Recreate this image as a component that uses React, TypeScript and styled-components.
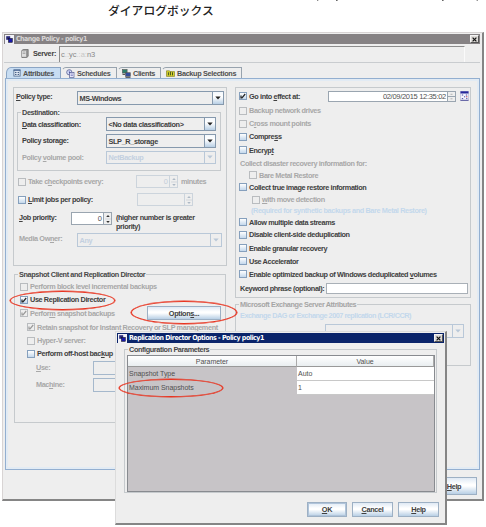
import React from "react";
import styled, { createGlobalStyle, css } from "styled-components";

const Global = createGlobalStyle`
  * { box-sizing: border-box; }
  body { margin: 0; background: #fff; overflow: hidden; }
`;

const Page = styled.div`
  position: relative;
  width: 486px;
  height: 527px;
  overflow: hidden;
  font: bold 7.3px/9px "Liberation Sans", Arial, sans-serif;
  letter-spacing: -0.39px;
  color: #444;
`;

const CaptionBlock = styled.div`
  height: 32px;
`;
const CaptionTail = styled.svg`
  display: block;
  width: 486px;
  height: 2px;
`;
const Caption = styled.div`
  padding-left: 108px;
  font: 500 11.8px/15px "Noto Sans CJK JP", sans-serif;
  letter-spacing: 0;
  color: #222;
`;

const Window = styled.section`
  width: 482px;
  height: 469px;
  margin-left: 2px;
  padding: 1px 2px 0 1px;
  background: #eeeeee;
  border: 1px solid #d8d4d4;
  border-right: 2px solid #858585;
  border-bottom: 2px solid #858585;
`;

const TitleBar = styled.header<{ $active?: boolean }>`
  display: flex;
  align-items: center;
  height: 10px;
  padding: 0 1px 0 1px;
  gap: 2px;
  font: bold 7px/10px "DejaVu Sans Condensed", "DejaVu Sans", sans-serif;
  letter-spacing: ${(p) => (p.$active ? "-0.48px" : "-0.5px")};
  color: ${(p) => (p.$active ? "#fff" : "#d8d5d5")};
  background: ${(p) => (p.$active ? "#0a246a" : "#868284")};
`;
const Spacer = styled.div`
  flex: 1;
`;
const CloseBox = styled.button`
  display: flex;
  align-items: center;
  justify-content: center;
  width: 9px;
  height: 8px;
  padding: 0;
  background: #dcd9d6;
  border: 1px solid #f4f4f4;
  border-right-color: #555;
  border-bottom-color: #555;
`;

const ServerRow = styled.div`
  display: flex;
  align-items: center;
  height: 19px;
  padding-left: 17px;
  gap: 4px;
  border-bottom: 1px solid #c9cccf;
`;
const ServerField = styled.div`
  width: 406px;
  height: 16px;
  margin-top: 2px;
  margin-left: -1px;
  padding: 2px 1px;
  font: 7.5px/11px "Liberation Sans", sans-serif;
  letter-spacing: 0;
  color: #888;
  border-top: 1px solid #8c8c8c;
  border-left: 1px solid #8c8c8c;
  border-right: 1px solid #fafafa;
`;
const Faint = styled.span`
  color: #c6c6c6;
`;

const Tabs = styled.nav`
  display: flex;
  height: 15px;
  padding: 4px 0 0 2px;
`;
const Tab = styled.div<{ $w: number; $on?: boolean }>`
  display: flex;
  align-items: center;
  gap: 2px;
  width: ${(p) => p.$w}px;
  height: 11px;
  padding-left: ${(p) => (p.$on ? 6 : 4)}px;
  white-space: nowrap;
  letter-spacing: -0.34px;
  color: #505050;
  background: ${(p) => (p.$on ? "#c8ddf2" : "#eeeeee")};
  border: 1px solid ${(p) => (p.$on ? "#8ba5c4" : "#98a3ae")};
  border-bottom: 0;
  border-left-color: ${(p) => (p.$on ? "#8ba5c4" : "#eeeeee")};
  border-top-left-radius: 5px 6px;
`;

const TabPanel = styled.main`
  display: flex;
  gap: 8px;
  width: 475px;
  height: 392px;
  margin-left: 1px;
  padding: 8px 0 0 7px;
  border: 1px solid #93afd0;
  box-shadow: inset 0 0 0 2px #e2ebf4;
`;
const Column = styled.div<{ $w: number }>`
  width: ${(p) => p.$w}px;
`;
const Group = styled.fieldset<{ $h: number; $w?: number; $mt?: number; $ml?: number }>`
  display: block;
  width: ${(p) => (p.$w ? p.$w + "px" : "100%")};
  min-width: 0;
  height: ${(p) => p.$h}px;
  margin: ${(p) => p.$mt ?? 0}px 0 0 ${(p) => p.$ml ?? 0}px;
  padding: 0;
  border: 1px solid #c6cacd;
`;
const GroupTitle = styled.legend<{ $off?: boolean }>`
  height: 9px;
  margin-left: 3px;
  padding: 0 1px;
  color: ${(p) => (p.$off ? "#a5a5a5" : "#484848")};
`;

const Row = styled.div<{ $h: number; $pl?: number; $mt?: number }>`
  display: flex;
  align-items: center;
  height: ${(p) => p.$h}px;
  margin-top: ${(p) => p.$mt ?? 0}px;
  padding-left: ${(p) => p.$pl ?? 0}px;
  white-space: nowrap;
`;
const Text = styled.span<{ $off?: boolean; $w?: number; $hint?: boolean; $up?: number; $ml?: number; $ls?: number }>`
  flex: none;
  width: ${(p) => (p.$w ? p.$w + "px" : "auto")};
  margin-left: ${(p) => p.$ml ?? 0}px;
  padding-bottom: ${(p) => p.$up ?? 0}px;
  color: ${(p) => (p.$hint ? "#c3d8ec" : p.$off ? "#a8a8a8" : "#404040")};
  ${(p) => p.$ls !== undefined && css`letter-spacing: ${p.$ls}px;`}
  u {
    text-decoration-thickness: 1px;
    text-underline-offset: 0.5px;
  }
`;
const Priority = styled(Text)`
  padding-top: 7px;
  line-height: 9px;
`;
const Labelled = styled.span<{ $w: number }>`
  display: flex;
  flex: none;
  align-items: center;
  width: ${(p) => p.$w}px;
`;

const Box = styled.span<{ $off?: boolean }>`
  display: flex;
  flex: none;
  width: 8px;
  height: 8px;
  margin-right: 2px;
  background: ${(p) => (p.$off ? "#eeeeee" : "linear-gradient(#fff, #c4d8ec)")};
  border: 1px solid ${(p) => (p.$off ? "#b9bcbf" : "#86a0bd")};
`;

const fieldTone = (off?: boolean) => css`
  color: ${off ? "#c3d0e0" : "#404040"};
  border: 1px solid ${off ? "#b9c8d8" : "#8699ad"};
`;
const ComboFrame = styled.div<{ $w: number; $h: number; $off?: boolean }>`
  display: flex;
  flex: none;
  width: ${(p) => p.$w}px;
  height: ${(p) => p.$h}px;
  line-height: ${(p) => p.$h - 1}px;
  ${(p) => fieldTone(p.$off)}
`;
const ComboValue = styled.div`
  flex: 1;
  padding-left: 1.5px;
  letter-spacing: -0.35px;
`;
const ComboArrow = styled.div<{ $off?: boolean }>`
  display: flex;
  align-items: center;
  justify-content: center;
  width: 11px;
  border-left: 1px solid ${(p) => (p.$off ? "#b9c8d8" : "#8699ad")};
  background: ${(p) => (p.$off ? "#eeeeee" : "linear-gradient(#f4f8fc, #fff 40%, #b8cfe5)")};
`;
const SpinFrame = styled.div<{ $w: number; $h: number; $off?: boolean }>`
  display: flex;
  flex: none;
  width: ${(p) => p.$w}px;
  height: ${(p) => p.$h}px;
  font: 7.5px/${(p) => p.$h - 1}px "Liberation Sans", sans-serif;
  letter-spacing: 0;
  background: ${(p) => (p.$off ? "#eeeeee" : "#fff")};
  color: ${(p) => (p.$off ? "#c3cdd8" : "#505050")};
  border: 1px solid ${(p) => (p.$off ? "#ccd4dc" : "#9aa5b0")};
`;
const SpinValue = styled.div<{ $ls?: number }>`
  flex: 1;
  padding-right: 1px;
  text-align: right;
  white-space: nowrap;
  letter-spacing: ${(p) => p.$ls ?? 0}px;
`;
const SpinButtons = styled.div<{ $off?: boolean }>`
  display: flex;
  align-items: center;
  justify-content: center;
  width: 8px;
  background: #eeeeee;
  border-left: 1px solid ${(p) => (p.$off ? "#ccd4dc" : "#9aa5b0")};
`;
const Field = styled.div<{ $w: number; $h: number; $plain?: boolean }>`
  flex: none;
  width: ${(p) => p.$w}px;
  height: ${(p) => p.$h}px;
  background: ${(p) => (p.$plain ? "#eeeeee" : "#fff")};
  border: 1px solid ${(p) => (p.$plain ? "#a5b8cc" : "#a9b0b7")};
`;
const Button = styled.button<{ $w: number; $h: number; $focus?: boolean }>`
  width: ${(p) => p.$w}px;
  height: ${(p) => p.$h}px;
  padding: 0;
  font: inherit;
  letter-spacing: -0.33px;
  color: #404040;
  background: linear-gradient(#dfe9f4, #fff 40%, #fff 50%, #b8cfe5);
  border: 1px solid #9db0c4;
  box-shadow: ${(p) => (p.$focus ? "inset 0 0 0 1px #b0c4da" : "none")};
`;
const WindowFooter = styled.footer`
  display: flex;
  justify-content: flex-end;
  padding: 7px 3px 0 0;
`;

const Dialog = styled.section`
  position: absolute;
  left: 115px;
  top: 331px;
  width: 332px;
  height: 194px;
  padding: 1px;
  background: #eeeeee;
  border: 1px solid #dcdcdc;
  border-right: 2px solid #858585;
  border-bottom: 2px solid #858585;
`;
const Table = styled.div`
  display: grid;
  grid-template-columns: 169px 1fr;
  grid-template-rows: 11px 14px 14px 1fr;
  width: 308px;
  height: 137px;
  margin: 1px 0 0 2px;
  border: 1px solid #888b90;
  background: #c7c4c7;
  font: 7px/13px "Liberation Sans", sans-serif;
  letter-spacing: -0.04px;
  color: #505050;
`;
const HeadCell = styled.div`
  height: 11px;
  line-height: 11px;
  text-align: center;
  background: linear-gradient(#fff, #e9eef0);
  border-right: 1px solid #aaa;
  border-bottom: 1px solid #999;
`;
const Cell = styled.div<{ $value?: boolean }>`
  padding-left: 1px;
  background: ${(p) => (p.$value ? "#fff" : "transparent")};
  border-bottom: 1px solid ${(p) => (p.$value ? "#c8c8c8" : "transparent")};
`;
const DialogFooter = styled.footer`
  display: flex;
  justify-content: flex-end;
  gap: 5px;
  padding: 9px 5px 0 0;
`;
const Ring = styled.div<{ $x: number; $y: number; $w: number; $h: number }>`
  position: absolute;
  left: ${(p) => p.$x}px;
  top: ${(p) => p.$y}px;
  width: ${(p) => p.$w}px;
  height: ${(p) => p.$h}px;
  border: 1px solid #e8321e;
  border-radius: 50%;
  box-shadow: 0 0 0 0.5px #e8321e;
`;

/* An ampersand in a label marks its mnemonic letter. */
function Mn({ t }: { t: string }) {
  const i = t.indexOf("&");
  if (i < 0) return <>{t}</>;
  return (
    <>
      {t.slice(0, i)}
      <u>{t[i + 1]}</u>
      {t.slice(i + 2)}
    </>
  );
}

function Check({ t, on, off }: { t: string; on?: boolean; off?: boolean }) {
  return (
    <>
      <Box $off={off}>
        {on && (
          <svg width="6" height="6" viewBox="0 0 6 6">
            <path d="M1 2.6v2.2h1L5.2 1" fill="none" stroke={off ? "#999" : "#222"} strokeWidth="1.2" />
          </svg>
        )}
      </Box>
      <Text $off={off}>
        <Mn t={t} />
      </Text>
    </>
  );
}

function Combo({ w, h, t, off }: { w: number; h: number; t: string; off?: boolean }) {
  return (
    <ComboFrame $w={w} $h={h} $off={off}>
      <ComboValue>{t}</ComboValue>
      <ComboArrow $off={off}>
        <svg width="6" height="4" viewBox="0 0 6 4">
          <path d="M0.3 0.5h5.4L3 3.6z" fill={off ? "#b9c8d8" : "#222"} />
        </svg>
      </ComboArrow>
    </ComboFrame>
  );
}

function Spinner({ w, h, t, off, ls }: { w: number; h: number; t: string; off?: boolean; ls?: number }) {
  const c = off ? "#aeb9c5" : "#333";
  return (
    <SpinFrame $w={w} $h={h} $off={off}>
      <SpinValue $ls={ls}>{t}</SpinValue>
      <SpinButtons $off={off}>
        <svg width="6" height="10" viewBox="0 0 6 10">
          <path d="M1.2 3L3 1l1.8 2zM1.2 7L3 9l1.8-2z" fill={c} />
          <path d="M0 5h6" stroke="#c5ccd3" strokeWidth="0.7" />
        </svg>
      </SpinButtons>
    </SpinFrame>
  );
}

function DateSpinner() {
  return (
    <SpinFrame $w={128} $h={11}>
      <SpinValue $ls={-0.3}>02/09/2015 12:35:02</SpinValue>
      <SpinButtons>
        <svg width="7" height="9" viewBox="0 0 7 9">
          <path d="M0 4.5h7" stroke="#9aa5b0" />
          <path d="M2.5 2.3h2M2.5 6.8h2" stroke="#a5a5a5" strokeWidth="0.8" />
        </svg>
      </SpinButtons>
    </SpinFrame>
  );
}

const WinIcon = () => (
  <svg width="9" height="9" viewBox="0 0 9 9">
    <rect width="9" height="9" fill="#f2f2f8" />
    <rect x="1.2" y="1.2" width="4" height="3.6" fill="#2a2a7a" />
    <rect x="3.4" y="3.4" width="4" height="4" fill="#1717a8" stroke="#111" strokeWidth="0.5" />
  </svg>
);
const Close = () => (
  <CloseBox aria-label="Close">
    <svg width="5" height="5" viewBox="0 0 5 5">
      <path d="M0.6 0.6l3.8 3.8M4.4 0.6L0.6 4.4" stroke="#111" strokeWidth="1.2" />
    </svg>
  </CloseBox>
);
const ServerIcon = () => (
  <svg width="8" height="9" viewBox="0 0 8 9">
    <path d="M0.8 1.5L2.2 0.5h5v6.8L5.8 8.5h-5z" fill="#999" stroke="#555" strokeWidth="0.6" />
    <path d="M1 1.8h4v6H1z" fill="#dedede" />
    <path d="M1.6 3h2.8M1.6 4.5h2.8" stroke="#888" strokeWidth="0.6" />
  </svg>
);
const AttrIcon = () => (
  <svg width="8" height="8" viewBox="0 0 8 8">
    <rect x="0.9" y="0.9" width="6.2" height="6.2" fill="#e6effa" stroke="#4d668a" strokeWidth="0.8" />
    <path d="M0.6 1.2h6.8" stroke="#3a5a8c" />
    <path d="M2 3.4h1.5M4.6 3.4H6M2 5.4h1.5M4.6 5.4H6" stroke="#375078" />
  </svg>
);
const ClockIcon = () => (
  <svg width="9" height="9" viewBox="0 0 9 9">
    <circle cx="3.3" cy="3.3" r="2.6" fill="#d8e2fa" stroke="#555c93" strokeWidth="0.8" />
    <rect x="3.5" y="3.4" width="4.5" height="5" fill="#eef0ff" stroke="#555c93" strokeWidth="0.7" />
    <path d="M3.3 1.7v2h1.4M4.6 5h2.3M4.6 6.6h2.3" fill="none" stroke="#4646a0" strokeWidth="0.6" />
  </svg>
);
const ClientsIcon = () => (
  <svg width="9" height="9" viewBox="0 0 9 9">
    <rect x="0.4" y="0.5" width="4.7" height="3.6" fill="#2d806b" stroke="#555" strokeWidth="0.6" />
    <rect x="3.6" y="3.7" width="4.7" height="3.6" fill="#344d9b" stroke="#555" strokeWidth="0.6" />
    <path d="M0.5 5.5h2.5M3.5 8.4h5" stroke="#555" />
  </svg>
);
const BackupIcon = () => (
  <svg width="9" height="8" viewBox="0 0 9 8">
    <path d="M0.5 1.8h3l0.6 0.8h4.4v4.8h-8z" fill="#d8d52c" stroke="#77751c" strokeWidth="0.6" />
    <path d="M2.4 3.3v3M4.4 2.8v3.5M6.5 3.3v3" stroke="#42501f" />
  </svg>
);
const CalendarIcon = () => (
  <svg width="9" height="10" viewBox="0 0 9 10">
    <rect x="0.5" y="0.5" width="8" height="9" fill="#f4f4fc" stroke="#c0c0dc" strokeWidth="0.8" />
    <rect x="0.5" y="0.3" width="8" height="2.2" fill="#26269a" />
    <path d="M1.8 4h1.4M5.8 4h1.4M1.8 7.6h1.4M4 5.8h1.2M6.2 7.6h1.2" stroke="#4747a5" />
    <path d="M6 5.8h1.4" stroke="#bd4455" />
    <path d="M0.5 9.3h8" stroke="#333388" strokeWidth="0.8" />
  </svg>
);

export default function App() {
  return (
    <Page>
      <Global />
      <CaptionBlock>
        <CaptionTail viewBox="0 0 486 2">
          <path d="M317 0h1.3M336 0.2h1.6M442 0.2h1.6M476.6 0h1.3" stroke="#666" strokeWidth="1.6" />
        </CaptionTail>
        <Caption>ダイアログボックス</Caption>
      </CaptionBlock>

      <Window>
        <TitleBar>
          <WinIcon />
          Change Policy - policy1
          <Spacer />
          <Close />
        </TitleBar>
        <ServerRow>
          <ServerIcon />
          <Text $ls={-0.3}>Server:</Text>
          <ServerField>
            c<Faint>.:</Faint>yc<Faint>.:a:</Faint>n3
          </ServerField>
        </ServerRow>
        <Tabs>
          <Tab $w={55} $on><AttrIcon />Attributes</Tab>
          <Tab $w={56}><ClockIcon />Schedules</Tab>
          <Tab $w={44}><ClientsIcon />Clients</Tab>
          <Tab $w={81}><BackupIcon />Backup Selections</Tab>
        </Tabs>
        <TabPanel>
          <Column $w={214}>
            <Group $h={179}>
              <Row $h={20} $pl={2}>
                <Text $w={61} $up={3}><Mn t="&Policy type:" /></Text>
                <Combo w={147} h={14} t="MS-Windows" />
              </Row>
              <Group $h={63} $w={204} $ml={3}>
                <GroupTitle>Destination:</GroupTitle>
                <Row $h={16} $pl={4} $mt={-1}>
                  <Text $w={84}><Mn t="&Data classification:" /></Text>
                  <Combo w={110} h={14} t="<No data classification>" />
                </Row>
                <Row $h={17} $pl={4}>
                  <Text $w={84}>Policy storage:</Text>
                  <Combo w={110} h={14} t="SLP_R_storage" />
                </Row>
                <Row $h={16} $pl={4}>
                  <Text $off $w={84}><Mn t="Policy &volume pool:" /></Text>
                  <Combo w={110} h={13} t="NetBackup" off />
                </Row>
              </Group>
              <Row $h={21} $pl={4}>
                <Labelled $w={118}><Check t="Take c&heckpoints every:" off /></Labelled>
                <Spinner w={42} h={13} t="0" off />
                <Text $off $ml={3}>minutes</Text>
              </Row>
              <Row $h={15} $pl={4}>
                <Labelled $w={119}><Check t="&Limit jobs per policy:" /></Labelled>
                <Spinner w={56} h={13} t="" off />
              </Row>
              <Row $h={23} $pl={5}>
                <Text $w={52} $up={2}><Mn t="&Job priority:" /></Text>
                <Spinner w={41} h={13} t="0" />
                <Priority $ml={4}>(higher number is greater<br />priority)</Priority>
              </Row>
              <Row $h={19} $pl={5}>
                <Text $off $w={58} $up={3}><Mn t="Media Ow&ner:" /></Text>
                <Combo w={145} h={14} t="Any" off />
              </Row>
            </Group>
            <Group $h={153} $w={212} $mt={4} $ml={1}>
              <GroupTitle>Snapshot Client and Replication Director</GroupTitle>
              <Row $h={13} $pl={5} $mt={1}><Check t="Perform block level incremental backups" off /></Row>
              <Row $h={13} $pl={5}><Check t="Use Replication Director" on /></Row>
              <Row $h={14} $pl={5}>
                <Labelled $w={127}><Check t="Perfor&m snapshot backups" on off /></Labelled>
                <Button $w={74} $h={14}><Mn t="Option&s..." /></Button>
              </Row>
              <Row $h={14} $pl={12}><Check t="Retain snapshot for Instant Recovery or SLP management" on off /></Row>
              <Row $h={13} $pl={12}><Check t="Hyper-V server:" off /></Row>
              <Row $h={13} $pl={12}><Check t="Perform off-host bac&kup" /></Row>
              <Row $h={16} $pl={21}>
                <Text $off $w={57} $up={2}><Mn t="&Use:" /></Text>
                <Field $w={120} $h={14} $plain />
              </Row>
              <Row $h={18} $pl={21}>
                <Text $off $w={57} $up={2}><Mn t="Mac&hine:" /></Text>
                <Field $w={120} $h={14} $plain />
              </Row>
            </Group>
          </Column>

          <Column $w={236}>
            <Group $h={211}>
              <Row $h={16} $pl={3}>
                <Labelled $w={89}><Check t="Go into &effect at:" on /></Labelled>
                <DateSpinner />
                <Text $w={4} />
                <CalendarIcon />
              </Row>
              <Row $h={13} $pl={3}><Check t="Backup network drives" off /></Row>
              <Row $h={13} $pl={3}><Check t="C&ross mount points" off /></Row>
              <Row $h={13} $pl={3}><Check t="Compre&ss" /></Row>
              <Row $h={14} $pl={3}><Check t="Encryp&t" /></Row>
              <Row $h={13} $pl={4}><Text $off>Collect disaster recovery information for:</Text></Row>
              <Row $h={10} $pl={13}><Check t="Bare Metal Restore" off /></Row>
              <Row $h={14} $pl={3}><Check t="Collect true image restore information" /></Row>
              <Row $h={11} $pl={16}><Check t="&with move detection" off /></Row>
              <Row $h={11} $pl={15}><Text $hint>(Required for synthetic backups and Bare Metal Restore)</Text></Row>
              <Row $h={12} $pl={3}><Check t="Allow multiple data streams" /></Row>
              <Row $h={13} $pl={3}><Check t="Disable client-side deduplication" /></Row>
              <Row $h={14} $pl={3}><Check t="Enable granular recovery" /></Row>
              <Row $h={12} $pl={3}><Check t="Use Accelerator" /></Row>
              <Row $h={14} $pl={3}><Check t="Enable optimized backup of Windows deduplicated &volumes" /></Row>
              <Row $h={14} $pl={4}>
                <Text $w={86}>Keyword phrase (optional):</Text>
                <Field $w={142} $h={11} />
              </Row>
            </Group>
            <Group $h={66} $mt={2}>
              <GroupTitle $off>Microsoft Exchange Server Attributes</GroupTitle>
              <Row $h={13} $pl={4}><Text $hint $ls={-0.48}>Exchange DAG or Exchange 2007 replication (LCR/CCR)</Text></Row>
              <Row $h={17} $pl={89}><Combo w={139} h={14} t="" off /></Row>
            </Group>
          </Column>
        </TabPanel>
        <WindowFooter>
          <Button $w={46} $h={18}><Mn t="&Help" /></Button>
        </WindowFooter>
      </Window>

      <Dialog>
        <TitleBar $active>
          <WinIcon />
          Replication Director Options - Policy policy1
          <Spacer />
          <Close />
        </TitleBar>
        <Group $h={148} $w={313} $mt={2} $ml={7}>
          <GroupTitle>Configuration Parameters</GroupTitle>
          <Table>
            <HeadCell>Parameter</HeadCell>
            <HeadCell>Value</HeadCell>
            <Cell>Snapshot Type</Cell>
            <Cell $value>Auto</Cell>
            <Cell>Maximum Snapshots</Cell>
            <Cell $value>1</Cell>
          </Table>
        </Group>
        <DialogFooter>
          <Button $w={40} $h={15} $focus><Mn t="&OK" /></Button>
          <Button $w={41} $h={15}><Mn t="&Cancel" /></Button>
          <Button $w={41} $h={15}><Mn t="&Help" /></Button>
        </DialogFooter>
      </Dialog>

      <Ring $x={10} $y={291} $w={105} $h={19} />
      <Ring $x={131} $y={301} $w={106} $h={23} />
      <Ring $x={119} $y={379} $w={104} $h={18} />
    </Page>
  );
}
